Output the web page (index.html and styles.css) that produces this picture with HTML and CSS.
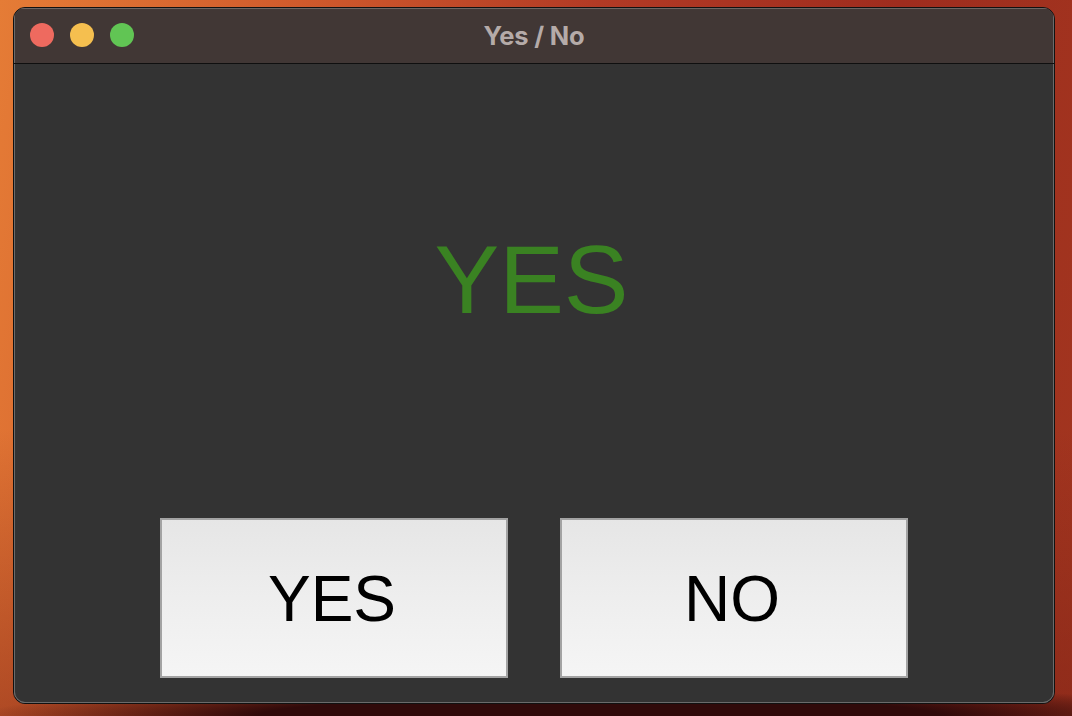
FILE: index.html
```html
<!DOCTYPE html>
<html>
<head>
<meta charset="utf-8">
<title>Yes / No</title>
<link rel="stylesheet" href="styles.css">
</head>
<body>
<div class="desktop">
  <div class="window">
    <div class="titlebar">
      <div class="lights">
        <span class="light red"></span>
        <span class="light yellow"></span>
        <span class="light green"></span>
      </div>
      <div class="title">Yes / No</div>
    </div>
    <div class="content">
      <div class="status">
        <div class="status-text">YES</div>
      </div>
      <div class="buttons">
        <button class="btn">YES</button>
        <button class="btn">NO</button>
      </div>
    </div>
  </div>
</div>
</body>
</html>
```

FILE: styles.css
```css
html, body {
  margin: 0;
  padding: 0;
  width: 1072px;
  height: 716px;
  overflow: hidden;
}

.desktop {
  width: 1072px;
  height: 716px;
  box-sizing: border-box;
  padding: 7px 0 0 13px;
  background:
    radial-gradient(ellipse 620px 34px at 600px 716px, rgba(48, 10, 10, 1) 55%, rgba(48, 10, 10, 0) 100%),
    linear-gradient(to bottom, rgba(120, 30, 20, 0) 60%, rgba(120, 30, 20, 0.45) 100%),
    linear-gradient(100deg, #e57c36 0%, #d05a2c 25%, #b23a25 50%, #9f2c1e 75%, #a2361f 100%);
}

.window {
  width: 1042px;
  height: 697px;
  box-sizing: border-box;
  border: 1px solid #111;
  border-radius: 12px;
  background: #333333;
  box-shadow: inset 0 0 0 1px #6b6b6b;
  overflow: hidden;
  display: flex;
  flex-direction: column;
  font-family: "Liberation Sans", Arial, sans-serif;
}

.titlebar {
  position: relative;
  height: 55px;
  flex: none;
  background: #413735;
  border-bottom: 1px solid #0f0f0f;
  box-shadow: inset 0 1px 0 #6e6563, inset 1px 0 0 #6b6b6b, inset -1px 0 0 #6b6b6b;
  display: flex;
  align-items: center;
  justify-content: center;
}

.lights {
  position: absolute;
  left: 16px;
  top: 15px;
  display: flex;
  gap: 16px;
}

.light {
  width: 24px;
  height: 24px;
  border-radius: 50%;
  display: block;
}

.red { background: #ee6a5f; }
.yellow { background: #f5bf4f; }
.green { background: #61c554; }

.title {
  color: #b5aba9;
  font-family: "Inter", "Liberation Sans", sans-serif;
  font-weight: 700;
  font-size: 25.5px;
  letter-spacing: -0.2px;
  margin-top: -1px;
}

.content {
  flex: 1;
  display: flex;
  flex-direction: column;
  box-shadow: inset 1px 0 0 #6b6b6b, inset -1px 0 0 #6b6b6b, inset 0 -1px 0 #6b6b6b;
}

.status {
  height: 454px;
  flex: none;
  box-sizing: border-box;
  padding-bottom: 22px;
  display: flex;
  align-items: center;
  justify-content: center;
}

.status-text {
  color: #3a8222;
  font-family: "Liberation Sans", Arial, sans-serif;
  font-size: 97px;
  line-height: 1.15;
  margin-left: -5px;
}

.buttons {
  display: flex;
  justify-content: center;
  gap: 52px;
  padding-right: 1px;
}

.btn {
  width: 348px;
  height: 160px;
  margin: 0;
  padding: 0;
  box-sizing: border-box;
  border: 2px solid #a3a3a3;
  border-radius: 0;
  background: linear-gradient(to bottom, #e6e6e6 0%, #eeeeee 50%, #f5f5f5 100%);
  color: #000;
  font-family: "Liberation Sans", Arial, sans-serif;
  font-size: 64px;
  line-height: 1;
  padding-top: 2px;
  padding-right: 3px;
}
```
